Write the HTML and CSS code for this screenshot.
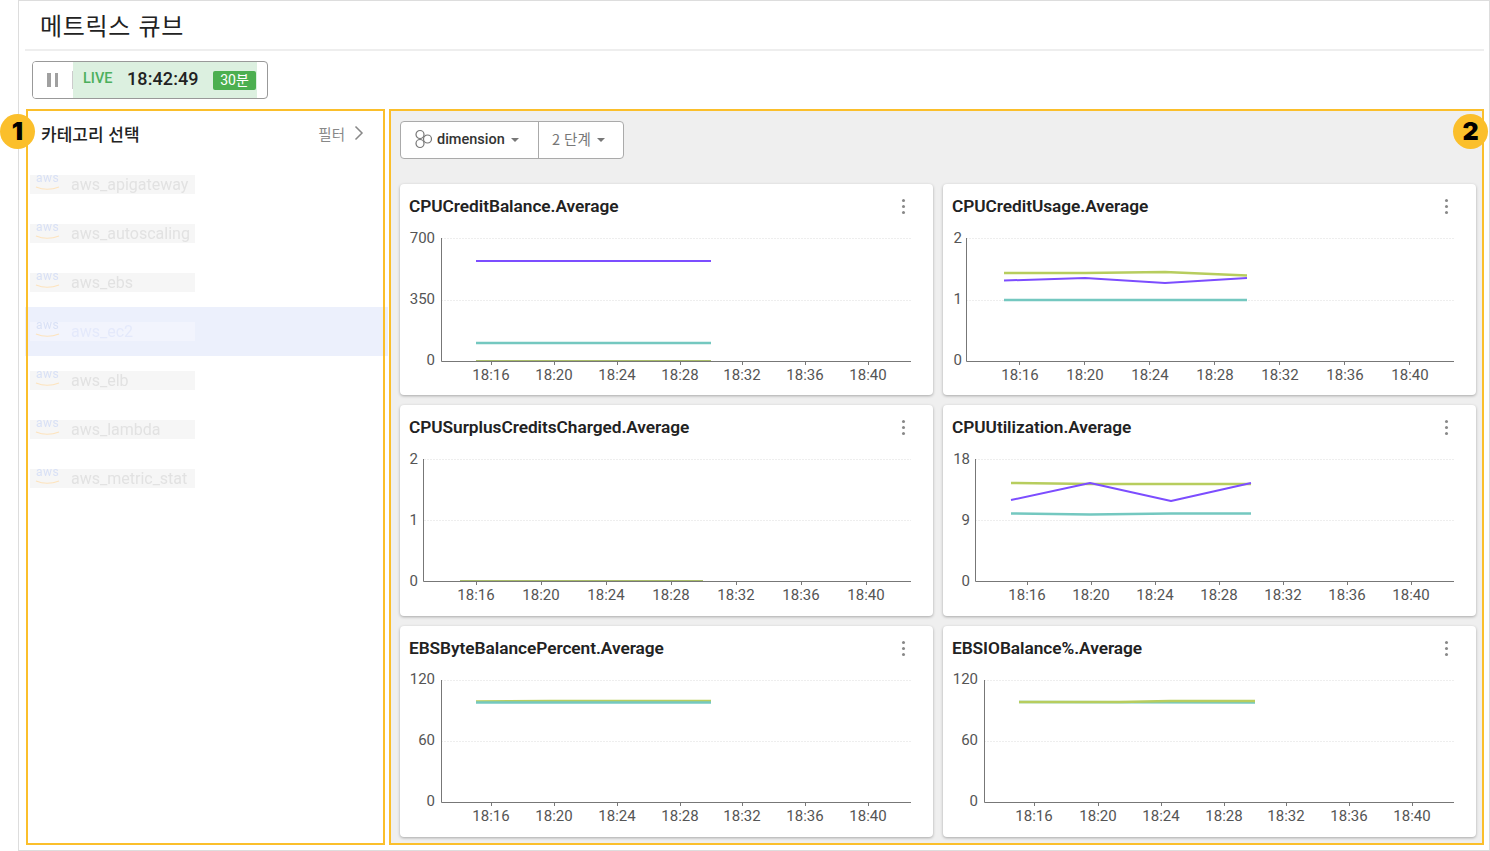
FILE: index.html
```html
<!DOCTYPE html>
<html lang="ko">
<head>
<meta charset="utf-8">
<title>메트릭스 큐브</title>
<link rel="stylesheet" href="styles.css">
</head>
<body>
<div class="frame">
  <header class="page-head"><h1>메트릭스 큐브</h1></header>
  <div class="toolbar">
    <div class="live">
      <button class="pause" aria-label="pause"><i></i><i></i></button>
      <div class="live-body">
        <span class="live-tag">LIVE</span>
        <span class="live-time">18:42:49</span>
        <span class="live-range">30분</span>
      </div>
    </div>
  </div>
  <main class="main">
    <aside class="side">
      <div class="side-head">
        <strong>카테고리 선택</strong>
        <span class="filter">필터
          <svg width="10" height="16" viewBox="0 0 10 16"><path d="M1.500 1.500 8 8l-6.500 6.500" fill="none" stroke="#888" stroke-width="1.500"/></svg>
        </span>
      </div>
      <ul class="cats">
        <li class="cat"><div class="skel"><span class="aws">aws<svg class="smile" width="26" height="6" viewBox="0 0 26 6"><path d="M1 1Q12 5.500 24 1"/></svg></span><span class="cat-name">aws_apigateway</span></div></li>
        <li class="cat"><div class="skel"><span class="aws">aws<svg class="smile" width="26" height="6" viewBox="0 0 26 6"><path d="M1 1Q12 5.500 24 1"/></svg></span><span class="cat-name">aws_autoscaling</span></div></li>
        <li class="cat"><div class="skel"><span class="aws">aws<svg class="smile" width="26" height="6" viewBox="0 0 26 6"><path d="M1 1Q12 5.500 24 1"/></svg></span><span class="cat-name">aws_ebs</span></div></li>
        <li class="cat on"><div class="skel"><span class="aws">aws<svg class="smile" width="26" height="6" viewBox="0 0 26 6"><path d="M1 1Q12 5.500 24 1"/></svg></span><span class="cat-name">aws_ec2</span></div></li>
        <li class="cat"><div class="skel"><span class="aws">aws<svg class="smile" width="26" height="6" viewBox="0 0 26 6"><path d="M1 1Q12 5.500 24 1"/></svg></span><span class="cat-name">aws_elb</span></div></li>
        <li class="cat"><div class="skel"><span class="aws">aws<svg class="smile" width="26" height="6" viewBox="0 0 26 6"><path d="M1 1Q12 5.500 24 1"/></svg></span><span class="cat-name">aws_lambda</span></div></li>
        <li class="cat"><div class="skel"><span class="aws">aws<svg class="smile" width="26" height="6" viewBox="0 0 26 6"><path d="M1 1Q12 5.500 24 1"/></svg></span><span class="cat-name">aws_metric_stat</span></div></li>
      </ul>
    </aside>
    <section class="content">
      <div class="selects">
        <div class="sel sel-a">
          <svg width="20" height="20" viewBox="0 0 20 20" fill="none" stroke="#777" stroke-width="1.200"><circle cx="6" cy="5.500" r="4"/><circle cx="13.500" cy="10" r="4"/><circle cx="6" cy="14.500" r="4"/></svg>
          <span>dimension</span><i class="caret"></i>
        </div>
        <div class="sel sel-b"><span>2 단계</span><i class="caret"></i></div>
      </div>
      <div class="cards">

        <article class="card">
          <div class="card-head"><h2>CPUCreditBalance.Average</h2><span class="kebab"><i></i><i></i><i></i></span></div>
          <svg class="chart" viewBox="400 228 533 167" width="533" height="167">
            <path class="grid" d="M441 238.500H911M441 300.500H911"/>
            <path class="axis" d="M441.500 238V361.500H911M491.500 361v4M554.500 361v4M617.500 361v4M680.500 361v4M742.500 361v4M805.500 361v4M868.500 361v4"/>
            <g class="yl"><text x="435" y="243">700</text><text x="435" y="304">350</text><text x="435" y="365">0</text></g>
            <g class="xl"><text x="491" y="380">18:16</text><text x="554" y="380">18:20</text><text x="617" y="380">18:24</text><text x="680" y="380">18:28</text><text x="742" y="380">18:32</text><text x="805" y="380">18:36</text><text x="868" y="380">18:40</text></g>
            <polyline class="s-g thin" points="476,360.500 711,360.500"/>
            <polyline class="s-t" points="476,343 711,343"/>
            <polyline class="s-p" points="476,261 711,261"/>
          </svg>
        </article>

        <article class="card">
          <div class="card-head"><h2>CPUCreditUsage.Average</h2><span class="kebab"><i></i><i></i><i></i></span></div>
          <svg class="chart" viewBox="943 228 533 167" width="533" height="167">
            <path class="grid" d="M966 238.500H1454M966 300.500H1454"/>
            <path class="axis" d="M966.500 238V361.500H1454M1019.500 361v4M1084.500 361v4M1149.500 361v4M1214.500 361v4M1279.500 361v4M1344.500 361v4M1409.500 361v4"/>
            <g class="yl"><text x="962" y="243">2</text><text x="962" y="304">1</text><text x="962" y="365">0</text></g>
            <g class="xl"><text x="1020" y="380">18:16</text><text x="1085" y="380">18:20</text><text x="1150" y="380">18:24</text><text x="1215" y="380">18:28</text><text x="1280" y="380">18:32</text><text x="1345" y="380">18:36</text><text x="1410" y="380">18:40</text></g>
            <polyline class="s-t" points="1004,300 1247,300"/>
            <polyline class="s-g" points="1004,273 1085,273 1165,272 1247,275.500"/>
            <polyline class="s-p" points="1004,280.500 1085,278 1165,283 1247,278"/>
          </svg>
        </article>

        <article class="card">
          <div class="card-head"><h2>CPUSurplusCreditsCharged.Average</h2><span class="kebab"><i></i><i></i><i></i></span></div>
          <svg class="chart" viewBox="400 449 533 167" width="533" height="167">
            <path class="grid" d="M424 459.500H911M424 520.500H911"/>
            <path class="axis" d="M423.500 459V581.500H911M476.500 581v4M541.500 581v4M606.500 581v4M671.500 581v4M736.500 581v4M801.500 581v4M866.500 581v4"/>
            <g class="yl"><text x="418" y="464">2</text><text x="418" y="525">1</text><text x="418" y="586">0</text></g>
            <g class="xl"><text x="476" y="600">18:16</text><text x="541" y="600">18:20</text><text x="606" y="600">18:24</text><text x="671" y="600">18:28</text><text x="736" y="600">18:32</text><text x="801" y="600">18:36</text><text x="866" y="600">18:40</text></g>
            <polyline class="s-g thin" points="460,580.500 703,580.500"/>
          </svg>
        </article>

        <article class="card">
          <div class="card-head"><h2>CPUUtilization.Average</h2><span class="kebab"><i></i><i></i><i></i></span></div>
          <svg class="chart" viewBox="943 449 533 167" width="533" height="167">
            <path class="grid" d="M975 459.500H1454M975 520.500H1454"/>
            <path class="axis" d="M975.500 459V581.500H1454M1027.500 581v4M1091.500 581v4M1155.500 581v4M1219.500 581v4M1283.500 581v4M1347.500 581v4M1411.500 581v4"/>
            <g class="yl"><text x="970" y="464">18</text><text x="970" y="525">9</text><text x="970" y="586">0</text></g>
            <g class="xl"><text x="1027" y="600">18:16</text><text x="1091" y="600">18:20</text><text x="1155" y="600">18:24</text><text x="1219" y="600">18:28</text><text x="1283" y="600">18:32</text><text x="1347" y="600">18:36</text><text x="1411" y="600">18:40</text></g>
            <polyline class="s-t" points="1011,513.500 1090,514.500 1171,513.500 1251,513.500"/>
            <polyline class="s-g" points="1011,483 1090,484 1171,484 1251,484"/>
            <polyline class="s-p" points="1011,500 1090,483 1171,501 1251,483"/>
          </svg>
        </article>

        <article class="card">
          <div class="card-head"><h2>EBSByteBalancePercent.Average</h2><span class="kebab"><i></i><i></i><i></i></span></div>
          <svg class="chart" viewBox="400 670 533 167" width="533" height="167">
            <path class="grid" d="M441 680.500H911M441 741.500H911"/>
            <path class="axis" d="M441.500 680V802.500H911M491.500 802v4M554.500 802v4M617.500 802v4M680.500 802v4M742.500 802v4M805.500 802v4M868.500 802v4"/>
            <g class="yl"><text x="435" y="684">120</text><text x="435" y="745">60</text><text x="435" y="806">0</text></g>
            <g class="xl"><text x="491" y="821">18:16</text><text x="554" y="821">18:20</text><text x="617" y="821">18:24</text><text x="680" y="821">18:28</text><text x="742" y="821">18:32</text><text x="805" y="821">18:36</text><text x="868" y="821">18:40</text></g>
            <polyline class="s-p" points="476,702 711,702"/>
            <polyline class="s-g" points="476,701.500 550,701 711,701"/>
            <polyline class="s-t" points="476,702.500 711,702.500"/>
          </svg>
        </article>

        <article class="card">
          <div class="card-head"><h2>EBSIOBalance%.Average</h2><span class="kebab"><i></i><i></i><i></i></span></div>
          <svg class="chart" viewBox="943 670 533 167" width="533" height="167">
            <path class="grid" d="M984 680.500H1454M984 741.500H1454"/>
            <path class="axis" d="M984.500 680V802.500H1454M1034.500 802v4M1098.500 802v4M1161.500 802v4M1224.500 802v4M1286.500 802v4M1349.500 802v4M1412.500 802v4"/>
            <g class="yl"><text x="978" y="684">120</text><text x="978" y="745">60</text><text x="978" y="806">0</text></g>
            <g class="xl"><text x="1034" y="821">18:16</text><text x="1098" y="821">18:20</text><text x="1161" y="821">18:24</text><text x="1224" y="821">18:28</text><text x="1286" y="821">18:32</text><text x="1349" y="821">18:36</text><text x="1412" y="821">18:40</text></g>
            <polyline class="s-p" points="1019,702 1255,702"/>
            <polyline class="s-t" points="1019,702 1255,702.500"/>
            <polyline class="s-g" points="1019,702 1120,702 1170,701 1255,701"/>
          </svg>
        </article>

      </div>
    </section>
  </main>

  <div class="mark mark-side"></div>
  <div class="mark mark-content"></div>
  <div class="badge badge-1">1</div>
  <div class="badge badge-2">2</div>
</div>
</body>
</html>
```

FILE: styles.css
```css
* { box-sizing: border-box; }
html, body { margin: 0; padding: 0; background: #fff; overflow: hidden; }
body { font-family: Roboto, "Noto Sans CJK KR", sans-serif; color: #222; }

.frame {
  position: relative;
  width: 1472px;
  height: 851px;
  margin-left: 18px;
  border: 1px solid #ddd;
  padding: 0 5px 0 6px;
}

.page-head {
  height: 50px;
  border-bottom: 2px solid #eee;
  padding-left: 15px;
}
.page-head h1 {
  margin: 0;
  font-size: 24px;
  font-weight: 400;
  line-height: 47px;
  letter-spacing: .7px;
  font-family: "Noto Sans CJK KR", sans-serif;
  color: #222;
}

.toolbar { height: 59px; padding: 10px 0 0 7px; }
.live {
  display: flex;
  width: 236px;
  height: 38px;
  border: 1px solid #999;
  border-radius: 4px;
  overflow: hidden;
  padding-right: 10px;
}
.pause {
  position: relative;
  display: flex;
  justify-content: center;
  align-items: center;
  gap: 4px;
  width: 40px;
  border: 0;
  background: #fff;
  padding: 0 1px 0 0;
}
.pause::after {
  content: "";
  position: absolute;
  right: 0;
  top: 9px;
  bottom: 9px;
  width: 1px;
  background: #ccc;
}
.pause i { width: 3.500px; height: 14px; background: #a0a0a0; }
.live-body {
  flex: 1;
  display: flex;
  align-items: center;
  background: #dcf0e0;
  padding: 0 1px 0 10px;
}
.live-tag { font-size: 14.500px; font-weight: 500; color: #4caf5c; width: 44px; margin-top: -3px; }
.live-time { font-size: 18px; font-weight: 500; color: #222; width: 86px; letter-spacing: .1px; margin-top: -3px; }
.live-range {
  width: 43px;
  height: 19px;
  line-height: 19px;
  text-align: center;
  font-size: 14px;
  color: #fff;
  background: #4caf50;
  border-radius: 2px;
}

.main { display: flex; height: 735px; }

.side { width: 365px; background: #fff; }
.side-head {
  display: flex;
  justify-content: space-between;
  align-items: center;
  height: 50px;
  padding: 0 26px 3px 16px;
}
.side-head strong { font-size: 17px; font-weight: 500; color: #222; font-family: "Noto Sans CJK KR", sans-serif; }
.filter {
  display: flex;
  align-items: center;
  gap: 9px;
  font-size: 14.500px;
  color: #888;
  font-family: "Noto Sans CJK KR", sans-serif;
  margin-top: -1px;
}
.cats { list-style: none; margin: 0; padding: 0; }
.cat { display: flex; align-items: center; height: 49px; padding: 0 0 1px 5px; }
.cat.on { background: #ecf0fc; margin-right: 2px; }
.skel {
  position: relative;
  display: flex;
  align-items: center;
  width: 165px;
  height: 19px;
  background: #f6f6f6;
  filter: blur(.7px);
}
.on .skel { background: #f2f4fd; }
.aws {
  position: relative;
  width: 41px;
  height: 19px;
  padding-left: 6px;
  font-size: 12px;
  line-height: 7px;
  letter-spacing: .5px;
  color: #d9e1f6;
}
.smile {
  position: absolute;
  left: 5px;
  top: 11px;
  fill: none;
  stroke: #fde3bd;
  stroke-width: 1.200;
}
.cat-name { font-size: 16px; color: #e2e2e2; }
.on .cat-name { color: #e4e9fb; }

.content {
  flex: 1;
  background: #efefef;
  padding: 11px 7px 0 10px;
}
.selects {
  display: flex;
  width: 224px;
  height: 38px;
  border: 1px solid #aaa;
  border-radius: 4px;
  background: #fff;
  margin-bottom: 25px;
}
.sel { display: flex; align-items: center; font-size: 14.500px; padding-bottom: 2px; }
.sel-a {
  width: 138px;
  padding-left: 13px;
  border-right: 1px solid #aaa;
  font-weight: 500;
  color: #333;
}
.sel-a span { margin-left: 3px; }
.sel-b { padding: 0 0 4px 13px; color: #777; font-family: "Noto Sans CJK KR", sans-serif; }
.sel-b .caret { margin-top: 4px; }
.caret {
  width: 0;
  height: 0;
  margin: 2px 0 0 6px;
  border: 4px solid transparent;
  border-top: 4px solid #777;
  border-bottom: 0;
}

.cards {
  display: grid;
  grid-template-columns: 533px 533px;
  grid-auto-rows: 211px;
  gap: 10px;
}
.card {
  background: #fff;
  border-radius: 4px;
  box-shadow: 0 1px 3px rgba(0, 0, 0, .3);
  overflow: hidden;
}
.card-head {
  display: flex;
  justify-content: space-between;
  align-items: center;
  height: 44px;
  padding: 0 28px 0 9px;
}
.card-head h2 { margin: 0; font-size: 17.300px; font-weight: 600; color: #222; letter-spacing: -.05px; }
.kebab { display: flex; flex-direction: column; gap: 3px; }
.kebab i { width: 3px; height: 3px; border-radius: 50%; background: #888; }

.chart { display: block; }
.grid { stroke: #eee; stroke-width: 1; stroke-dasharray: 2 1; fill: none; }
.axis { stroke: #777; stroke-width: 1; fill: none; }
.chart text { font-size: 15px; fill: #555; font-family: Roboto, sans-serif; }
.yl text { text-anchor: end; }
.xl text { text-anchor: middle; }
.s-p, .s-t, .s-g { fill: none; stroke-linejoin: round; }
.s-p { stroke: #7c4dff; stroke-width: 2; }
.s-t { stroke: #74c8c0; stroke-width: 2.500; }
.s-g { stroke: #b7cd5e; stroke-width: 2.500; }
.s-g.thin { stroke-width: 1; stroke: #a9bd6a; }

.mark {
  position: absolute;
  top: 108px;
  height: 736px;
  border: 2px solid #fbbf2b;
  pointer-events: none;
}
.mark-side { left: 7px; width: 359px; }
.mark-content { left: 370px; width: 1095px; }

.badge {
  position: absolute;
  top: 113px;
  width: 35px;
  height: 35px;
  border-radius: 50%;
  background: #fbbf2b;
  color: #000;
  text-align: center;
  font: 900 25px/35px Inter, sans-serif;
}
.badge-1 { left: -19px; }
.badge-2 { left: 1434px; }
```
